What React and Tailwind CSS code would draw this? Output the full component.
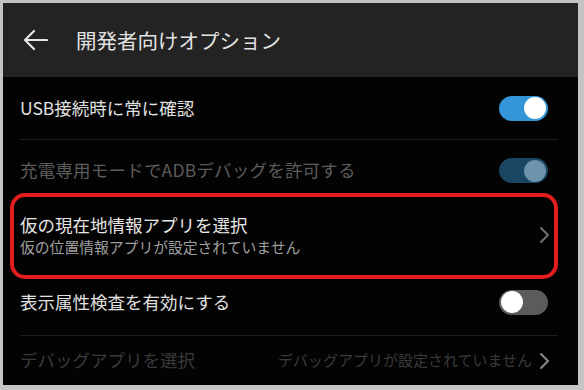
import { useState } from "react";

const font = { fontFamily: '"Noto Sans CJK JP", "Noto Sans", sans-serif' };

function Toggle({ on, dim }) {
  const track = dim ? "bg-[#1b4663]" : on ? "bg-[#3495d8]" : "bg-[#5b5b5b]";
  const knob = dim ? "bg-[#6d93ad]" : "bg-white";
  return (
    <div className={`flex h-[25px] w-[49px] items-center rounded-full px-[2px] ${track} ${on ? "justify-end" : "justify-start"}`}>
      <div className={`h-[22px] w-[22px] rounded-full ${knob}`} />
    </div>
  );
}

function Chevron({ color }) {
  return (
    <svg width="12" height="18" viewBox="0 0 12 18" fill="none" stroke={color} strokeWidth="2" strokeLinecap="round" strokeLinejoin="round">
      <path d="M3 2l7 7-7 7" />
    </svg>
  );
}

function Divider() {
  return <div className="ml-[17px] mr-[20px] h-px bg-[#1e1e1e]" />;
}

export default function App() {
  const [usb] = useState(true);

  return (
    <div className="h-[390px] w-[584px] bg-[#c4c4c4] pl-[3px] pr-[6px] pt-[3px] pb-[5px]" style={font}>
      <div className="flex h-full flex-col overflow-hidden bg-[#030303]">
        <header className="flex h-[74px] shrink-0 items-center bg-[#232323]">
          <svg className="ml-[19px]" width="26" height="22" viewBox="0 0 26 22" fill="none" stroke="#e6e6e6" strokeWidth="2.2" strokeLinecap="round" strokeLinejoin="round">
            <path d="M25 11H3M12 2L3 11l9 9" />
          </svg>
          <h1 className="ml-[28px] text-[20.5px] leading-none text-[#e2e2e2]">開発者向けオプション</h1>
        </header>

        <div className="flex h-[62px] shrink-0 items-center justify-between pl-[17px] pr-[30px]">
          <span className="text-[17.5px] text-[#e0e0e0]">USB接続時に常に確認</span>
          <Toggle on={usb} />
        </div>
        <Divider />

        <div className="flex h-[61px] shrink-0 items-center justify-between pl-[17px] pr-[30px]">
          <span className="text-[17.5px] tracking-[0.2px] text-[#5c5c5c]">充電専用モードでADBデバッグを許可する</span>
          <Toggle on dim />
        </div>

        <div className="relative flex h-[68px] shrink-0 items-center justify-between pl-[17px] pr-[28px]">
          <div className="flex flex-col">
            <span className="text-[17.5px] leading-[24px] text-[#e6e6e6]">仮の現在地情報アプリを選択</span>
            <span className="text-[14.8px] leading-[20px] text-[#a0a0a0]">仮の位置情報アプリが設定されていません</span>
          </div>
          <Chevron color="#6e6e6e" />
          <div className="pointer-events-none absolute left-[7px] right-[20px] top-[-8px] bottom-[-10px] rounded-[15px] border-4 border-[#e21d1d]" />
        </div>

        <div className="flex h-[66px] shrink-0 items-center justify-between pl-[17px] pr-[30px]">
          <span className="text-[17.5px] text-[#e0e0e0]">表示属性検査を有効にする</span>
          <Toggle on={false} />
        </div>
        <Divider />

        <div className="flex h-[49px] shrink-0 items-center justify-between pl-[17px] pr-[28px]">
          <span className="text-[17.5px] text-[#3a3a3a]">デバッグアプリを選択</span>
          <div className="flex items-center gap-[6px]">
            <span className="text-[15px] text-[#3a3a3a]">デバッグアプリが設定されていません</span>
            <Chevron color="#8a8a8a" />
          </div>
        </div>
      </div>
    </div>
  );
}
